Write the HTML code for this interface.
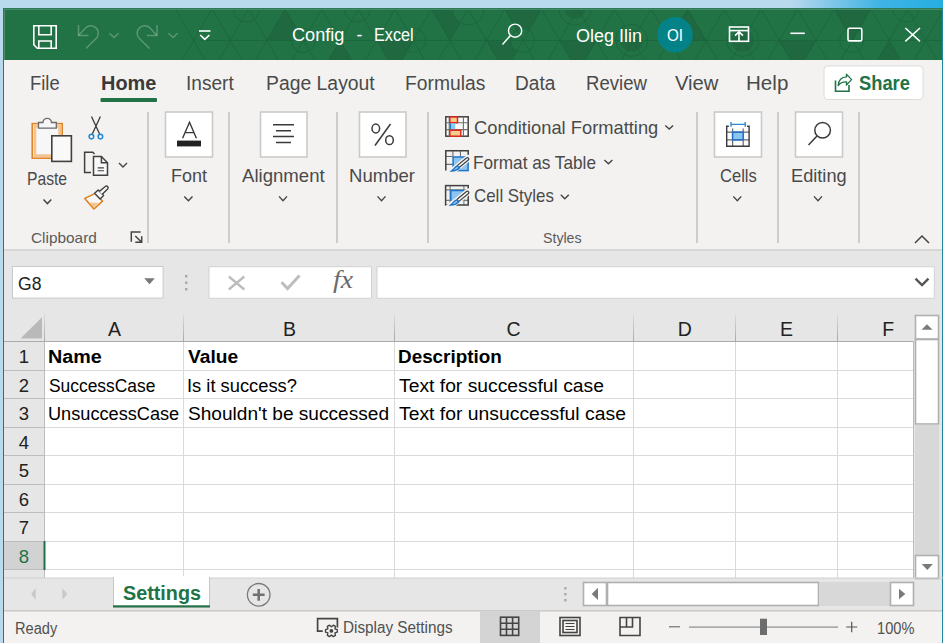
<!DOCTYPE html>
<html><head><meta charset="utf-8">
<style>
html,body{margin:0;padding:0;}
body{width:943px;height:643px;overflow:hidden;position:relative;background:#b9d9ec;font-family:"Liberation Sans",sans-serif;}
.b{position:absolute;box-sizing:border-box;}
.tx{position:absolute;white-space:nowrap;font-family:"Liberation Sans",sans-serif;}
svg.ic{position:absolute;left:0;top:0;}
</style></head><body>
<div class="b" style="left:0;top:0;width:943px;height:8px;background:linear-gradient(to right,#b9d9ec 0px,#b9d9ec 790px,#3fb3e4 880px,#25aee2 943px)"></div>
<!-- window border -->
<div class="b" style="left:3px;top:8px;width:940px;height:635px;background:#2c7b55"></div>
<div class="b" style="left:942px;top:9px;width:1px;height:634px;background:#1e87a0"></div>
<!-- title bar -->
<div class="b" style="left:4px;top:9px;width:938px;height:51px;background:#217346"></div>
<!-- ribbon -->
<div class="b" style="left:4px;top:60px;width:938px;height:189px;background:#f3f2f1"></div>
<div class="b" style="left:4px;top:249px;width:938px;height:2px;background:#d9d7d5"></div>
<!-- formula area -->
<div class="b" style="left:4px;top:251px;width:938px;height:327px;background:#e6e6e6"></div>
<!-- tab bar -->
<div class="b" style="left:4px;top:578px;width:938px;height:32px;background:#e6e6e6"></div>
<!-- status bar -->
<div class="b" style="left:4px;top:611px;width:938px;height:32px;background:#f3f2f1"></div>
<div class="b" style="left:4px;top:610px;width:938px;height:1px;background:#cdcbc9"></div>
<div class="b" style="left:4px;top:611px;width:938px;height:1px;background:#dddbd9"></div>
<svg class="ic" width="943" height="643" viewBox="0 0 943 643">
<defs><linearGradient id="hg" gradientUnits="userSpaceOnUse" x1="0" y1="314" x2="0" y2="341"><stop offset="0" stop-color="#dcdcdc"/><stop offset="1" stop-color="#a9a9a9"/></linearGradient><clipPath id="tbclip"><rect x="4" y="9" width="938" height="51"/></clipPath></defs>
<!-- pattern -->
<g clip-path="url(#tbclip)">
<g fill="#1f6840"><path d="M266.9,40.4 L303.5,40.4 L285.2,9 Z"/><path d="M340.1,40.4 L321.8,71.8 L358.4,71.8 Z"/><path d="M376.7,40.4 L413.3,40.4 L395,71.8 Z"/><path d="M431.6,9 L468.2,9 L449.9,40.4 Z"/><path d="M504.8,9 L541.4,9 L523.1,40.4 Z"/><path d="M486.5,40.4 L523.1,40.4 L504.8,71.8 Z"/><path d="M559.7,40.4 L596.3,40.4 L578,71.8 Z"/><path d="M669.5,40.4 L706.1,40.4 L687.8,9 Z"/><path d="M779.3,40.4 L815.9,40.4 L797.6,71.8 Z"/><path d="M834.2,9 L870.8,9 L852.5,40.4 Z"/><path d="M889.1,40.4 L870.8,71.8 L907.4,71.8 Z"/></g>
<g fill="#1f6840"><circle cx="575" cy="9" r="10"/><circle cx="631.7" cy="40.4" r="11"/><circle cx="742.7" cy="40.4" r="11"/></g>
<g fill="#217346"><circle cx="303.5" cy="40.4" r="12"/><circle cx="522.7" cy="40.4" r="12"/><circle cx="468.3" cy="9" r="16"/></g>
<path d="M175.4,9 L212.0,71.8 M212.0,9 L175.4,71.8 M212.0,9 L248.6,71.8 M248.6,9 L212.0,71.8 M248.6,9 L285.2,71.8 M285.2,9 L248.6,71.8 M285.2,9 L321.8,71.8 M321.8,9 L285.2,71.8 M321.8,9 L358.4,71.8 M358.4,9 L321.8,71.8 M358.4,9 L395.0,71.8 M395.0,9 L358.4,71.8 M395.0,9 L431.6,71.8 M431.6,9 L395.0,71.8 M431.6,9 L468.2,71.8 M468.2,9 L431.6,71.8 M468.2,9 L504.8,71.8 M504.8,9 L468.2,71.8 M504.8,9 L541.4,71.8 M541.4,9 L504.8,71.8 M541.4,9 L578.0,71.8 M578.0,9 L541.4,71.8 M578.0,9 L614.6,71.8 M614.6,9 L578.0,71.8 M614.6,9 L651.2,71.8 M651.2,9 L614.6,71.8 M651.2,9 L687.8,71.8 M687.8,9 L651.2,71.8 M687.8,9 L724.4,71.8 M724.4,9 L687.8,71.8 M724.4,9 L761.0,71.8 M761.0,9 L724.4,71.8 M761.0,9 L797.6,71.8 M797.6,9 L761.0,71.8 M797.6,9 L834.2,71.8 M834.2,9 L797.6,71.8 M834.2,9 L870.8,71.8 M870.8,9 L834.2,71.8 M870.8,9 L907.4,71.8 M907.4,9 L870.8,71.8 M907.4,9 L944.0,71.8 M944.0,9 L907.4,71.8 M944.0,9 L980.6,71.8 M980.6,9 L944.0,71.8 M200,40.4 H942" stroke="#1b643b" stroke-opacity="0.8" stroke-width="1" fill="none"/>
<g fill="none" stroke="#1b643b" stroke-opacity="0.8" stroke-width="1"><circle cx="246.2" cy="9" r="13"/><circle cx="303.5" cy="40.4" r="12"/><circle cx="357.2" cy="9" r="13"/><circle cx="413.7" cy="40.4" r="12"/><circle cx="468.3" cy="9" r="16"/><circle cx="522.7" cy="40.4" r="12"/><circle cx="575" cy="9" r="16"/><circle cx="631.7" cy="40.4" r="16"/><circle cx="742.7" cy="40.4" r="16"/><circle cx="851.6" cy="40.4" r="12"/><circle cx="906" cy="9" r="13"/></g>
</g>
<!-- /pattern -->
<rect x="4" y="9" width="1" height="51" fill="#4f8c6c"/><rect x="4" y="9" width="938" height="1" fill="#45886a"/>
<!-- ===== title bar icons ===== -->
<g fill="none" stroke="#fff" stroke-width="1.6">
  <path d="M33.8,25.8 H56.2 V48.2 H37.3 L33.8,44.7 Z"/>
  <path d="M38.8,25.8 V34.8 H51.2 V25.8"/>
  <path d="M38.8,48.2 V41 H51.2 V48.2"/>
</g>
<g fill="none" stroke="#fff" stroke-opacity="0.26" stroke-width="1.5">
  <path d="M78.5,25 V35.5 H88.5"/>
  <path d="M78.8,35.2 L85.7,27.7 A7.5,7.5 0 0 1 96.3,38.3 L86,48.5"/>
  <path d="M109.5,33.2 L114,37.5 L118.5,33.2"/>
  <path d="M157,25 V35.5 H147"/>
  <path d="M156.7,35.2 L149.8,27.7 A7.5,7.5 0 0 0 139.2,38.3 L149.5,48.5"/>
  <path d="M168.5,33.2 L173,37.5 L177.5,33.2"/>
</g>
<g fill="none" stroke="#fff" stroke-width="1.6">
  <path d="M199,31 H210.5"/>
  <path d="M200.2,35 L204.8,39.3 L209.4,35"/>
  <circle cx="515.1" cy="30.7" r="6.6" stroke-width="1.4"/>
  <path d="M510.4,35.5 L502.5,44.6" stroke-width="1.5"/>
  <rect x="729.5" y="27" width="19" height="14.3"/>
  <path d="M729.5,30.6 H748.5"/>
  <path d="M739,41 V32 M735,35.6 L739,31.8 L743,35.6"/>
  <path d="M790.4,33.3 H804.8"/>
  <rect x="848" y="28.3" width="13.8" height="12.6" rx="1.5"/>
  <path d="M905.3,28 L920,41.3 M920,28 L905.3,41.3"/>
</g>
<circle cx="675" cy="34.7" r="17.8" fill="#038387"/>
<!-- share button -->
<rect x="824" y="66" width="99" height="33.5" rx="3.5" fill="#fff" stroke="#dedcda" stroke-width="1"/>
<g fill="none" stroke="#217346" stroke-width="1.6">
  <path d="M835.5,80.4 V91.2 H849 V85.1"/>
  <path d="M838.2,85.6 C838.6,80 841.5,77.1 846.6,76.9 L846.4,74.1 L851.6,79.6 L846.4,85 L846.6,81.9 C842.5,81.7 840,83 838.2,85.6 Z" stroke-width="1.3" stroke-linejoin="round"/>
</g>
<!-- tab underline -->
<rect x="100.5" y="98" width="56.5" height="4" rx="1" fill="#217346"/>
<!-- ===== ribbon ===== -->
<g stroke="#b9b7b5" stroke-width="1.3">
  <path d="M148,112 V243 M229,112 V243 M337,112 V243 M428,112 V243 M697,112 V243 M778,112 V243 M859,112 V243"/>
</g>
<g fill="#fff" stroke="#cbcac8" stroke-width="1.6">
  <rect x="165.5" y="112" width="47" height="45"/>
  <rect x="260.5" y="112" width="46.5" height="45"/>
  <rect x="359.5" y="112" width="46.5" height="45"/>
  <rect x="714.5" y="112" width="47" height="45"/>
  <rect x="795.5" y="112" width="47" height="45"/>
</g>
<!-- paste -->
<rect x="32.2" y="123.6" width="30" height="34.6" fill="#f7f7f7" stroke="#e07f1f" stroke-width="1.5"/>
<path d="M33.5,125 H61 V156.9 H33.5 Z M36.3,127.8 V154.2 H58.2 V127.8 Z" fill="#f3c48f" fill-rule="evenodd"/>
<path d="M38.5,122.5 H43 A4.2,4.2 0 0 1 51.4,122.5 H56.3 V128.2 H38.5 Z" fill="#f8f8f8" stroke="#6b6b6b" stroke-width="1.3"/>
<rect x="51.8" y="135.8" width="19.6" height="25.6" fill="#f9f9f9" stroke="#404040" stroke-width="1.6"/>
<!-- scissors -->
<g fill="none" stroke="#3a3a3a" stroke-width="1.3">
  <path d="M91.5,116.5 L99.6,134 M100.4,116.5 L92.3,134"/>
</g>
<g fill="none" stroke="#1e88d6" stroke-width="1.5">
  <circle cx="91.4" cy="136.6" r="2.3"/><circle cx="100.4" cy="136.6" r="2.3"/>
</g>
<!-- copy -->
<g fill="none" stroke="#404040" stroke-width="1.5">
  <path d="M91,172.4 H84.6 V152.3 H92.8 L94.5,154"/>
  <path d="M93.5,156.5 H101.4 L107.5,162.7 V175.2 H93.5 Z" fill="#f8f8f8"/>
  <path d="M101.4,156.5 V162.8 H107.5"/>
  <path d="M97.7,167.9 H103.9 M97.7,170.8 H103.9" stroke-width="1.1"/>
</g>
<!-- format painter -->
<path d="M95.2,193.4 L84.8,198.4 L93.9,209 L102.6,201.2 Z" fill="#f7f7f7" stroke="#df7f1e" stroke-width="1.6" stroke-linejoin="round"/>
<path d="M88.6,202.6 L98.8,203 L94,207.6 Z" fill="#f5c590"/>
<path d="M94.6,193.2 L98.2,189.9 L103.6,195.6 L100.1,199 Z" fill="#f8f8f8" stroke="#404040" stroke-width="1.4" stroke-linejoin="round"/>
<path d="M99.4,191.4 L105.3,186.6 A1.6,1.6 0 0 1 107.6,188.9 L102,194.4" fill="#f8f8f8" stroke="#404040" stroke-width="1.4"/>
<!-- chevrons -->
<g fill="none" stroke="#444" stroke-width="1.4">
  <path d="M43.5,199.4 L47.4,203.6 L51.3,199.4"/>
  <path d="M119,163 L123,167 L127,163"/>
  <path d="M184.3,196.4 L188.4,200.8 L192.5,196.4"/>
  <path d="M279,196.4 L283,200.8 L287,196.4"/>
  <path d="M377.5,196.4 L381.5,200.8 L385.5,196.4"/>
  <path d="M733.3,196.4 L737.3,200.8 L741.3,196.4"/>
  <path d="M814,196.4 L818,200.8 L822,196.4"/>
  <path d="M665.3,125.4 L669.2,129 L673.1,125.4"/>
  <path d="M604.4,159.9 L608.4,163.8 L612.4,159.9"/>
  <path d="M560.8,194.8 L564.8,198.7 L568.8,194.8"/>
  <path d="M915,243 L922,236 L929,243" stroke-width="1.5"/>
</g>
<!-- dialog launcher -->
<g fill="none" stroke="#444" stroke-width="1.5">
  <path d="M131.3,241.8 V232 H140.6"/>
  <path d="M135.3,236 L141.6,242.2 M141.7,236.3 V242.3 H135.3"/>
</g>
<!-- font icon -->
<path d="M182.6,138.3 L189.5,122.2 L196.4,138.3 M185,132.6 H194" fill="none" stroke="#3a3a3a" stroke-width="1.4"/>
<rect x="177" y="140.6" width="24" height="5.8" fill="#222"/>
<!-- alignment -->
<g stroke="#3a3a3a" stroke-width="1.5">
  <path d="M273,124.7 H294 M276,130.7 H291 M273,136.6 H294 M276,142.6 H291"/>
</g>
<!-- number % -->
<g fill="none" stroke="#3a3a3a" stroke-width="1.5">
  <ellipse cx="375.8" cy="128.5" rx="3.8" ry="4.4"/>
  <ellipse cx="389.5" cy="140.2" rx="3.8" ry="4.4"/>
  <path d="M390.5,124 L375,145.5"/>
</g>
<!-- cells -->
<rect x="727" y="126.5" width="22" height="19.5" fill="#fcfcfc"/>
<path d="M726.7,132.2 H749.1 M726.7,139.8 H749.1 M732.6,128.5 V146.2 M743.2,128.5 V146.2" fill="none" stroke="#6a6a6a" stroke-width="1.2"/>
<path d="M728.8,126.3 H726.7 V146.2 H749.1 V126.3 H747.1" fill="none" stroke="#3a3a3a" stroke-width="1.4"/>
<rect x="732.6" y="132.2" width="10.6" height="7.6" fill="#8ec5f0" stroke="#1f74c8" stroke-width="1.6"/>
<path d="M731,124.4 H745.2 M731,122 V126.8 M745.2,122 V126.8" fill="none" stroke="#2b87d8" stroke-width="1.4"/>
<!-- editing magnifier -->
<g fill="none" stroke="#3a3a3a" stroke-width="1.5">
  <circle cx="822.6" cy="130.3" r="7.8"/>
  <path d="M817,136 L808.5,145"/>
</g>
<!-- conditional formatting -->
<g fill="none" stroke="#404040">
  <rect x="445.8" y="116.8" width="22.4" height="19.4" fill="#fafafa" stroke-width="1.5"/>
  <path d="M445.8,122.7 H468.2 M445.8,129.6 H468.2 M463.4,116.8 V136.2 M449.2,116.8 V136.2" stroke-width="1.1" stroke="#6e6e6e"/>
</g>
<rect x="449.8" y="117" width="7.7" height="5.7" fill="#f5cd8f" stroke="#e0281e" stroke-width="1.5"/>
<rect x="449.6" y="123.3" width="5.6" height="6" fill="#8cc8f4" stroke="#1068c0" stroke-width="0" />
<path d="M450.2,123.3 V129.3" stroke="#1068c0" stroke-width="1.3"/>
<rect x="449.8" y="130.2" width="11" height="6" fill="#f5cd8f" stroke="#e0281e" stroke-width="1.5"/>
<!-- format as table -->
<path d="M452.9,150.8 V156.5 M460.4,150.8 V156.5 M445.8,156.5 H453 M445.8,164.4 H453" stroke="#6e6e6e" stroke-width="1.1" fill="none"/>
<path d="M445.8,170.4 V150.8 H468.2 V155.5" stroke="#404040" stroke-width="1.5" fill="none"/>
<rect x="453.1" y="157" width="15" height="13.6" fill="#8ec5f0" stroke="#1f74c8" stroke-width="1.5"/>
<path d="M468.2,158.2 L452,171.5" stroke="#f3f2f1" stroke-width="6.5" stroke-linecap="round"/>
<path d="M467.4,159 L458.6,166.2" stroke="#404040" stroke-width="4" stroke-linecap="round"/>
<path d="M467.4,159 L458.6,166.2" stroke="#fafafa" stroke-width="1.5" stroke-linecap="round"/>
<path d="M449.3,171.4 C452.5,172 457.5,171.6 460.4,168 L457.9,165.2 C454.6,165.4 453.6,169.6 449.3,171.4 Z" fill="#1f74c8"/>
<path d="M453.5,170 C455.5,169.8 457.3,169 458.3,167.6 L457.5,166.7 C456,167 455,168.6 453.5,170 Z" fill="#8ec5f0"/>
<!-- cell styles -->
<path d="M450.1,185.2 V205.3 M463.9,185.2 V205.3 M445.4,189.9 H468.5 M445.4,200.4 H468.5" stroke="#7a7a7a" stroke-width="1.1" fill="none"/>
<rect x="445.6" y="185.6" width="22.6" height="19.4" fill="none" stroke="#404040" stroke-width="1.5"/>
<path d="M450.8,200.6 V190.6 H464 V200.6 Z" fill="#8ec5f0"/>
<path d="M450.8,200.6 V190.6 H464" fill="none" stroke="#1f74c8" stroke-width="1.5"/>
<path d="M468.5,191.6 L448,208" stroke="#f3f2f1" stroke-width="6.5" stroke-linecap="round"/>
<path d="M467.4,192.6 L458.6,199.8" stroke="#404040" stroke-width="4" stroke-linecap="round"/>
<path d="M467.4,192.6 L458.6,199.8" stroke="#fafafa" stroke-width="1.5" stroke-linecap="round"/>
<path d="M448.3,205.5 C451.5,206.1 456.5,205.7 459.6,202 L457.1,199.2 C453.8,199.4 452.8,203.7 448.3,205.5 Z" fill="#1f74c8"/>
<path d="M452.5,204.1 C454.5,203.9 456.3,203.1 457.5,201.7 L456.7,200.8 C455.2,201.1 454.2,202.7 452.5,204.1 Z" fill="#8ec5f0"/>
<!-- ===== formula bar ===== -->
<rect x="12.5" y="266.5" width="150.6" height="31.6" fill="#fff" stroke="#c9c9c9" stroke-width="1"/>
<path d="M144.2,278.2 H154.8 L149.5,284.2 Z" fill="#787878"/>
<g fill="#a8a8a8"><rect x="185" y="275" width="2.4" height="2.4"/><rect x="185" y="281.5" width="2.4" height="2.4"/><rect x="185" y="288" width="2.4" height="2.4"/></g>
<rect x="209" y="266.7" width="162.5" height="31.6" fill="#fff" stroke="#d2d2d2" stroke-width="1"/>
<path d="M228.8,276.5 L244.3,289.5 M244.3,276.5 L228.8,289.5" stroke="#bdbdbd" stroke-width="2.4"/>
<path d="M281.5,282.3 L287.6,288.6 L299.5,275.6" fill="none" stroke="#bdbdbd" stroke-width="3"/>
<text x="333" y="288.3" font-family="Liberation Serif" font-style="italic" font-size="25" fill="#6a6a6a" textLength="20" lengthAdjust="spacingAndGlyphs">fx</text>
<rect x="377" y="266.7" width="557.3" height="31.6" fill="#fff" stroke="#d2d2d2" stroke-width="1"/>
<path d="M915.5,278.6 L922,285 L928.5,278.6" fill="none" stroke="#555" stroke-width="2.4"/>
<!-- ===== grid ===== -->
<rect x="45" y="342" width="868" height="236" fill="#fff"/>
<rect x="4" y="541" width="40" height="28.5" fill="#d2d2d2"/>
<path d="M20.5,338.6 L42,338.6 L42,317.2 Z" fill="#b9b9b9"/>
<g stroke="#bdbdbd" stroke-width="1">
  <path d="M44.5,341 V578"/>
  <path d="M183.5,314 V341 M394.5,314 V341 M633.5,314 V341 M735.5,314 V341 M837.5,314 V341 M44.5,314 V341" stroke="url(#hg)"/>
  <path d="M4,370.5 H44 M4,398.5 H44 M4,427.5 H44 M4,455.5 H44 M4,484.5 H44 M4,512.5 H44 M4,541.5 H44 M4,569.5 H44"/>
  <path d="M913.5,341 V578"/>
</g>
<g stroke="#dadada" stroke-width="1">
  <path d="M183.5,342 V578 M394.5,342 V578 M633.5,342 V578 M735.5,342 V578 M837.5,342 V578"/>
  <path d="M45,370.5 H913 M45,398.5 H913 M45,427.5 H913 M45,455.5 H913 M45,484.5 H913 M45,512.5 H913 M45,541.5 H913 M45,569.5 H913"/>
</g>
<path d="M4,341.5 H913" stroke="#ababab" stroke-width="1"/>
<rect x="43.5" y="541" width="2" height="29" fill="#217346"/>
<!-- vertical scrollbar -->
<rect x="915.5" y="315.5" width="23" height="23.5" fill="#fff" stroke="#b0b0b0" stroke-width="1.6"/>
<path d="M921.5,329.8 H932.5 L927,324.2 Z" fill="#7a7a7a"/>
<rect x="915.5" y="339.5" width="23" height="84.5" fill="#fff" stroke="#b0b0b0" stroke-width="1.6"/>
<rect x="915" y="424.7" width="24" height="130.3" fill="#d8d8d8"/>
<rect x="915.5" y="555.5" width="23" height="23" fill="#fff" stroke="#b0b0b0" stroke-width="1.6"/>
<path d="M921.7,564 H932.9 L927.3,570 Z" fill="#7a7a7a"/>
<!-- sheet tabs bar -->
<path d="M4,578 H943" stroke="#d0d0d0" stroke-width="1"/>
<path d="M35.6,588.3 V599.7 L31.2,594 Z" fill="#c8c8c8"/>
<path d="M62.4,588.3 V599.7 L67.4,594 Z" fill="#c8c8c8"/>
<rect x="113.5" y="577.5" width="96" height="30" fill="#fff" stroke="#c6c6c6" stroke-width="1"/>
<rect x="114" y="576" width="95" height="3" fill="#fff"/>
<rect x="113" y="605.3" width="97" height="2.1" fill="#217346"/>
<circle cx="258.7" cy="594.8" r="11.3" fill="none" stroke="#7a7a7a" stroke-width="1.3"/>
<path d="M252.8,594.8 H264.6 M258.7,588.9 V600.7" stroke="#707070" stroke-width="2.5"/>
<g fill="#aaaaaa"><rect x="564.2" y="587.1" width="2.4" height="2.4"/><rect x="564.2" y="593" width="2.4" height="2.4"/><rect x="564.2" y="599" width="2.4" height="2.4"/></g>
<!-- horizontal scrollbar -->
<rect x="583.5" y="582.5" width="23" height="23" fill="#fff" stroke="#b0b0b0" stroke-width="1.6"/>
<path d="M598,587.8 V600 L591.7,593.9 Z" fill="#7a7a7a"/>
<rect x="607.5" y="582.5" width="211" height="23" fill="#fff" stroke="#b0b0b0" stroke-width="1.6"/>
<rect x="819" y="582" width="71" height="24" fill="#d8d8d8"/>
<rect x="890.5" y="582.5" width="23" height="23" fill="#fff" stroke="#b0b0b0" stroke-width="1.6"/>
<path d="M899,588.7 V599.3 L905.3,594 Z" fill="#7a7a7a"/>
<!-- status bar -->
<path d="M322.7,631.1 H317.6 V618.6 H337.4 V627.4" fill="none" stroke="#444" stroke-width="1.7"/>
<path d="M334.95,628.85 L337.27,629.65 L337.27,632.15 L334.95,632.95 L335.41,635.36 L333.25,636.61 L331.40,635.00 L329.55,636.61 L327.39,635.36 L327.85,632.95 L325.53,632.15 L325.53,629.65 L327.85,628.85 L327.39,626.44 L329.55,625.19 L331.40,626.80 L333.25,625.19 L335.41,626.44 Z" fill="#f3f2f1" stroke="#444" stroke-width="1.4" stroke-linejoin="round"/>
<circle cx="331.4" cy="630.9" r="1.9" fill="#444"/>
<rect x="480" y="611" width="60" height="32" fill="#d4d4d4"/>
<g fill="none" stroke="#444" stroke-width="1.6">
  <rect x="500.5" y="617.2" width="18.2" height="18.2"/>
  <path d="M506.5,617.2 V635.4 M512.6,617.2 V635.4 M500.5,623.3 H518.7 M500.5,629.3 H518.7"/>
  <rect x="560" y="617.5" width="20" height="18"/>
  <rect x="563" y="620.5" width="14" height="12"/>
  <path d="M565.5,623.5 H574.5 M565.5,626.5 H574.5 M565.5,629.5 H574.5" stroke-width="1.1"/>
  <path d="M620,617.5 H640 V635.5 H620 Z M620,627 H632.5 V617.5 M626.5,617.5 V627"/>
</g>
<path d="M669,626.8 H680" stroke="#666" stroke-width="1.1"/>
<path d="M689,627.1 H838" stroke="#ababab" stroke-width="1.8"/>
<rect x="760" y="618.7" width="7" height="16.3" fill="#6d6d6d"/>
<path d="M846.2,627 H857.3 M851.7,621.8 V632.2" stroke="#555" stroke-width="1.2"/>
</svg>

<div class="tx" id="t0" style="left:292.40px;top:27.20px;font-size:17.6px;line-height:17.6px;color:#fff;font-weight:400;transform:scaleX(1.0305);transform-origin:0 0;">Config</div>
<div class="tx" id="t1" style="left:356.60px;top:27.20px;font-size:17.6px;line-height:17.6px;color:#fff;font-weight:400;">-</div>
<div class="tx" id="t2" style="left:373.50px;top:27.20px;font-size:17.6px;line-height:17.6px;color:#fff;font-weight:400;transform:scaleX(0.9218);transform-origin:0 0;">Excel</div>
<div class="tx" id="t3" style="left:576.10px;top:27.80px;font-size:17.6px;line-height:17.6px;color:#fff;font-weight:400;transform:scaleX(1.0242);transform-origin:0 0;">Oleg Ilin</div>
<div class="tx" id="t4" style="left:667.10px;top:27.93px;font-size:15.8px;line-height:15.8px;color:#fff;font-weight:400;transform:scaleX(0.9616);transform-origin:0 0;">OI</div>
<div class="tx" id="t5" style="left:29.60px;top:72.77px;font-size:20px;line-height:20px;color:#4a4a4a;font-weight:400;transform:scaleX(0.9195);transform-origin:0 0;">File</div>
<div class="tx" id="t6" style="left:186.10px;top:72.77px;font-size:20px;line-height:20px;color:#4a4a4a;font-weight:400;transform:scaleX(0.9543);transform-origin:0 0;">Insert</div>
<div class="tx" id="t7" style="left:265.50px;top:72.77px;font-size:20px;line-height:20px;color:#4a4a4a;font-weight:400;transform:scaleX(0.9682);transform-origin:0 0;">Page Layout</div>
<div class="tx" id="t8" style="left:405.10px;top:72.77px;font-size:20px;line-height:20px;color:#4a4a4a;font-weight:400;transform:scaleX(0.9630);transform-origin:0 0;">Formulas</div>
<div class="tx" id="t9" style="left:514.80px;top:72.77px;font-size:20px;line-height:20px;color:#4a4a4a;font-weight:400;transform:scaleX(0.9543);transform-origin:0 0;">Data</div>
<div class="tx" id="t10" style="left:585.50px;top:72.77px;font-size:20px;line-height:20px;color:#4a4a4a;font-weight:400;transform:scaleX(0.9289);transform-origin:0 0;">Review</div>
<div class="tx" id="t11" style="left:675.00px;top:72.77px;font-size:20px;line-height:20px;color:#4a4a4a;font-weight:400;transform:scaleX(1.0105);transform-origin:0 0;">View</div>
<div class="tx" id="t12" style="left:745.60px;top:72.77px;font-size:20px;line-height:20px;color:#4a4a4a;font-weight:400;transform:scaleX(1.0297);transform-origin:0 0;">Help</div>
<div class="tx" id="t13" style="left:100.50px;top:72.77px;font-size:20px;line-height:20px;color:#3b3a39;font-weight:700;transform:scaleX(0.9955);transform-origin:0 0;">Home</div>
<div class="tx" id="t14" style="left:859.40px;top:74.09px;font-size:19.5px;line-height:19.5px;color:#217346;font-weight:700;transform:scaleX(0.9383);transform-origin:0 0;">Share</div>
<div class="tx" id="t15" style="left:26.70px;top:170.53px;font-size:17.8px;line-height:17.8px;color:#4a4a4a;font-weight:400;transform:scaleX(0.8816);transform-origin:0 0;">Paste</div>
<div class="tx" id="t16" style="left:170.60px;top:167.63px;font-size:17.8px;line-height:17.8px;color:#4a4a4a;font-weight:400;transform:scaleX(1.0104);transform-origin:0 0;">Font</div>
<div class="tx" id="t17" style="left:241.80px;top:167.63px;font-size:17.8px;line-height:17.8px;color:#4a4a4a;font-weight:400;transform:scaleX(1.0451);transform-origin:0 0;">Alignment</div>
<div class="tx" id="t18" style="left:349.40px;top:167.63px;font-size:17.8px;line-height:17.8px;color:#4a4a4a;font-weight:400;transform:scaleX(1.0430);transform-origin:0 0;">Number</div>
<div class="tx" id="t19" style="left:719.50px;top:167.63px;font-size:17.8px;line-height:17.8px;color:#4a4a4a;font-weight:400;transform:scaleX(0.9311);transform-origin:0 0;">Cells</div>
<div class="tx" id="t20" style="left:791.30px;top:167.63px;font-size:17.8px;line-height:17.8px;color:#4a4a4a;font-weight:400;transform:scaleX(1.0233);transform-origin:0 0;">Editing</div>
<div class="tx" id="t21" style="left:473.90px;top:120.13px;font-size:17.8px;line-height:17.8px;color:#4a4a4a;font-weight:400;transform:scaleX(1.0303);transform-origin:0 0;">Conditional Formatting</div>
<div class="tx" id="t22" style="left:473.00px;top:154.83px;font-size:17.8px;line-height:17.8px;color:#4a4a4a;font-weight:400;transform:scaleX(0.9669);transform-origin:0 0;">Format as Table</div>
<div class="tx" id="t23" style="left:474.00px;top:187.83px;font-size:17.8px;line-height:17.8px;color:#4a4a4a;font-weight:400;transform:scaleX(0.9512);transform-origin:0 0;">Cell Styles</div>
<div class="tx" id="t24" style="left:30.50px;top:230.40px;font-size:15px;line-height:15px;color:#5a5a5a;font-weight:400;transform:scaleX(1.0257);transform-origin:0 0;">Clipboard</div>
<div class="tx" id="t25" style="left:542.60px;top:230.20px;font-size:15px;line-height:15px;color:#5a5a5a;font-weight:400;transform:scaleX(0.9443);transform-origin:0 0;">Styles</div>
<div class="tx" id="t26" style="left:18.00px;top:274.56px;font-size:18px;line-height:18px;color:#222;font-weight:400;transform:scaleX(0.9750);transform-origin:0 0;">G8</div>
<div class="tx" id="t27" style="left:114.40px;top:320.09px;font-size:19.5px;line-height:19.5px;color:#222;font-weight:400;transform:translateX(-50%);">A</div>
<div class="tx" id="t28" style="left:289.50px;top:320.09px;font-size:19.5px;line-height:19.5px;color:#222;font-weight:400;transform:translateX(-50%);">B</div>
<div class="tx" id="t29" style="left:513.50px;top:320.09px;font-size:19.5px;line-height:19.5px;color:#222;font-weight:400;transform:translateX(-50%);">C</div>
<div class="tx" id="t30" style="left:684.80px;top:320.09px;font-size:19.5px;line-height:19.5px;color:#222;font-weight:400;transform:translateX(-50%);">D</div>
<div class="tx" id="t31" style="left:786.60px;top:320.09px;font-size:19.5px;line-height:19.5px;color:#222;font-weight:400;transform:translateX(-50%);">E</div>
<div class="tx" id="t32" style="left:888.30px;top:320.09px;font-size:19.5px;line-height:19.5px;color:#222;font-weight:400;transform:translateX(-50%);">F</div>
<div class="tx" id="t33" style="left:24.00px;top:348.44px;font-size:18.5px;line-height:18.5px;color:#222;font-weight:400;transform:translateX(-50%);">1</div>
<div class="tx" id="t34" style="left:24.00px;top:376.94px;font-size:18.5px;line-height:18.5px;color:#222;font-weight:400;transform:translateX(-50%);">2</div>
<div class="tx" id="t35" style="left:24.00px;top:405.44px;font-size:18.5px;line-height:18.5px;color:#222;font-weight:400;transform:translateX(-50%);">3</div>
<div class="tx" id="t36" style="left:24.00px;top:433.94px;font-size:18.5px;line-height:18.5px;color:#222;font-weight:400;transform:translateX(-50%);">4</div>
<div class="tx" id="t37" style="left:24.00px;top:462.44px;font-size:18.5px;line-height:18.5px;color:#222;font-weight:400;transform:translateX(-50%);">5</div>
<div class="tx" id="t38" style="left:24.00px;top:490.94px;font-size:18.5px;line-height:18.5px;color:#222;font-weight:400;transform:translateX(-50%);">6</div>
<div class="tx" id="t39" style="left:24.00px;top:519.44px;font-size:18.5px;line-height:18.5px;color:#222;font-weight:400;transform:translateX(-50%);">7</div>
<div class="tx" id="t40" style="left:24.00px;top:547.94px;font-size:18.5px;line-height:18.5px;color:#217346;font-weight:400;transform:translateX(-50%);">8</div>
<div class="tx" id="t41" style="left:47.50px;top:349.09px;font-size:17.5px;line-height:17.5px;color:#000;font-weight:700;transform:scaleX(1.1293);transform-origin:0 0;">Name</div>
<div class="tx" id="t42" style="left:187.50px;top:349.09px;font-size:17.5px;line-height:17.5px;color:#000;font-weight:700;transform:scaleX(1.0959);transform-origin:0 0;">Value</div>
<div class="tx" id="t43" style="left:398.30px;top:349.09px;font-size:17.5px;line-height:17.5px;color:#000;font-weight:700;transform:scaleX(1.0785);transform-origin:0 0;">Description</div>
<div class="tx" id="t44" style="left:48.50px;top:377.79px;font-size:17.5px;line-height:17.5px;color:#000;font-weight:400;transform:scaleX(0.9938);transform-origin:0 0;">SuccessCase</div>
<div class="tx" id="t45" style="left:186.50px;top:377.79px;font-size:17.5px;line-height:17.5px;color:#000;font-weight:400;transform:scaleX(1.0470);transform-origin:0 0;">Is it success?</div>
<div class="tx" id="t46" style="left:399.30px;top:377.79px;font-size:17.5px;line-height:17.5px;color:#000;font-weight:400;transform:scaleX(1.1030);transform-origin:0 0;">Text for successful case</div>
<div class="tx" id="t47" style="left:47.50px;top:406.39px;font-size:17.5px;line-height:17.5px;color:#000;font-weight:400;transform:scaleX(1.0376);transform-origin:0 0;">UnsuccessCase</div>
<div class="tx" id="t48" style="left:187.50px;top:406.39px;font-size:17.5px;line-height:17.5px;color:#000;font-weight:400;transform:scaleX(1.0906);transform-origin:0 0;">Shouldn't be successed</div>
<div class="tx" id="t49" style="left:399.30px;top:406.39px;font-size:17.5px;line-height:17.5px;color:#000;font-weight:400;transform:scaleX(1.1056);transform-origin:0 0;">Text for unsuccessful case</div>
<div class="tx" id="t50" style="left:122.50px;top:583.69px;font-size:19.5px;line-height:19.5px;color:#217346;font-weight:700;transform:scaleX(1.0132);transform-origin:0 0;">Settings</div>
<div class="tx" id="t51" style="left:15.00px;top:620.86px;font-size:16px;line-height:16px;color:#505050;font-weight:400;transform:scaleX(0.9127);transform-origin:0 0;">Ready</div>
<div class="tx" id="t52" style="left:342.80px;top:620.46px;font-size:16px;line-height:16px;color:#505050;font-weight:400;transform:scaleX(0.9550);transform-origin:0 0;">Display Settings</div>
<div class="tx" id="t53" style="left:876.90px;top:621.06px;font-size:16px;line-height:16px;color:#505050;font-weight:400;transform:scaleX(0.9145);transform-origin:0 0;">100%</div>
</body></html>
